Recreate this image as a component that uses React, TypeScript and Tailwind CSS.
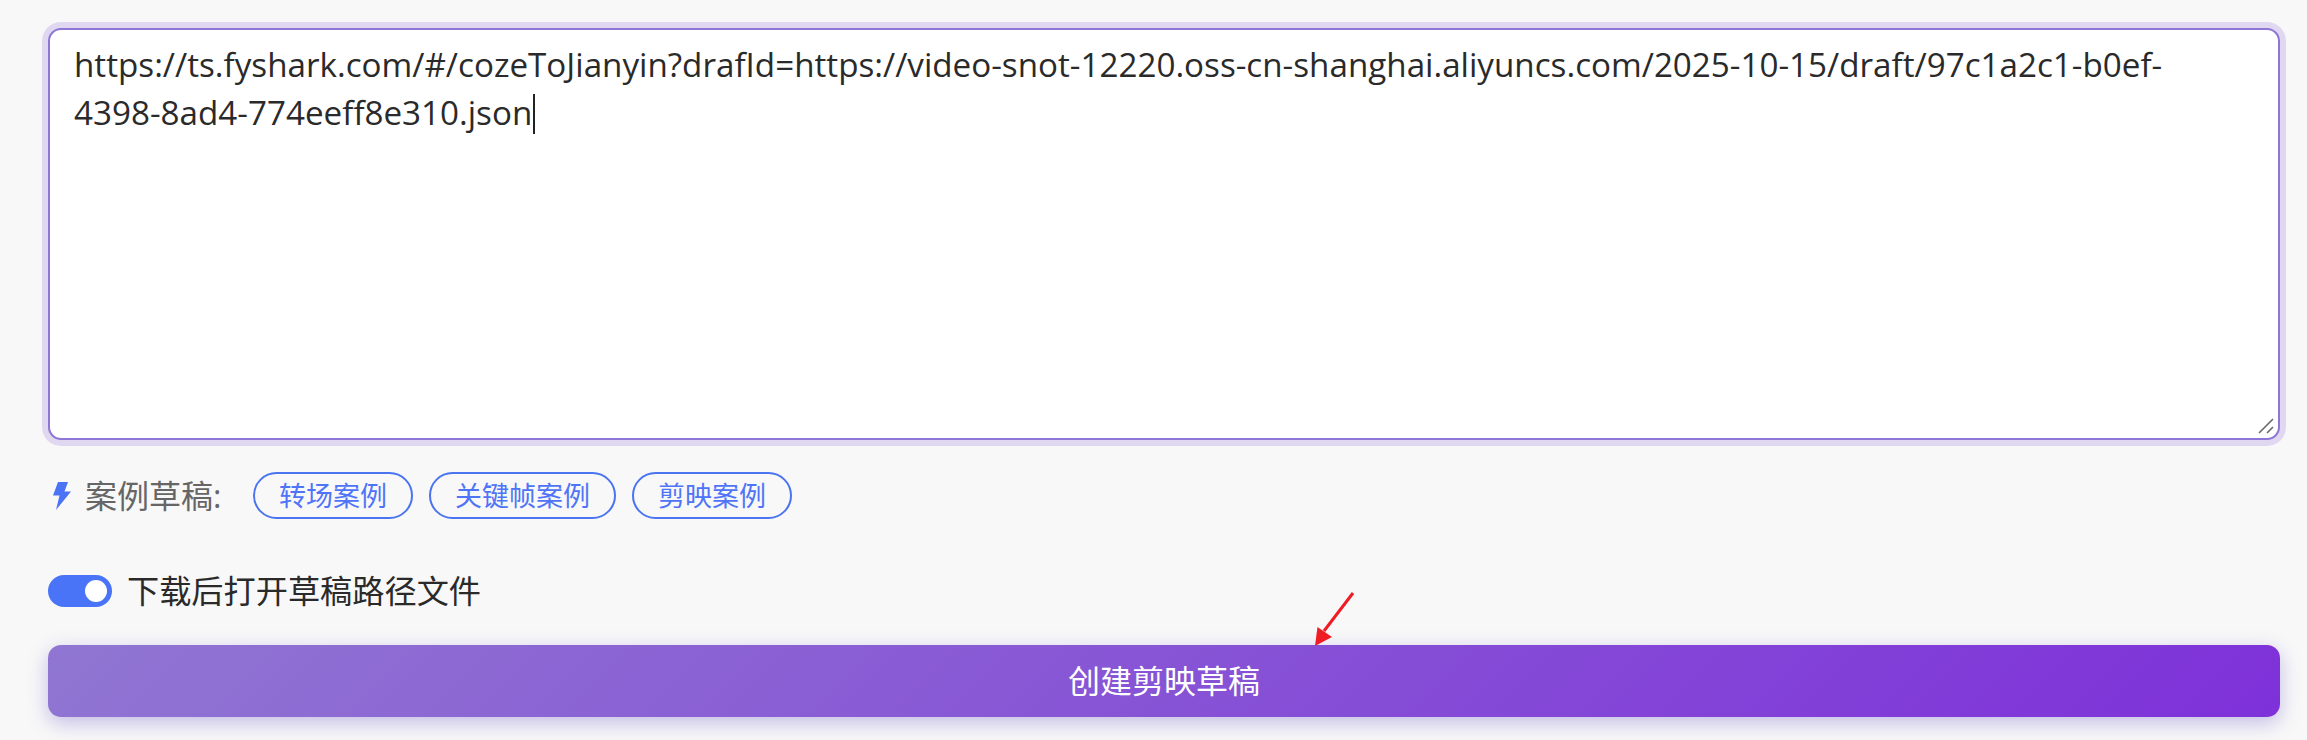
import React from 'react';

const samples = ['转场案例', '关键帧案例', '剪映案例'];

const App = () => {
  return (
    <div className="relative h-[740px] overflow-hidden bg-[#f8f8f8] pl-[48px] pr-[27px] pt-[28px] font-['Open_Sans','Noto_Sans_CJK_SC',sans-serif]">
      {/* url box */}
      <div className="relative h-[412px] rounded-[13px] border-2 border-[#8e76d6] bg-white pl-[24px] pr-[70px] pt-[11px] text-[33.2px] leading-[48px] text-[#2a2a2a] shadow-[0_0_0_6px_#e0d8f1]">
        <span className="break-words">
          https://ts.fyshark.com/#/cozeToJianyin?drafId=https://video-snot-12220.oss-cn-shanghai.aliyuncs.com/2025-10-15/draft/97c1a2c1-b0ef-4398-8ad4-774eeff8e310.json
        </span>
        <span className="ml-px inline-block h-[40px] w-[2px] bg-[#222] align-[-9px]" />
        {/* resize handle */}
        <svg className="absolute bottom-[2px] right-[2px]" width="18" height="18" viewBox="0 0 18 18">
          <path d="M1 15 L15 1 M9 15 L15 9" stroke="#6b6b6b" strokeWidth="1.6" fill="none" />
        </svg>
      </div>

      {/* samples */}
      <div className="mt-[32px] flex h-[47px] items-center">
        <svg className="ml-[5px] mr-[14px]" width="18" height="28" viewBox="0 0 18 28">
          <path d="M5 0 H15 L11.5 9.5 H18 L3 28 L6.5 13.5 H0 Z" fill="#4a74f5" />
        </svg>
        <span className="w-[135px] whitespace-nowrap text-[32px] text-[#666666]">案例草稿:</span>
        <div className="ml-[33px] flex gap-[16px]">
          {samples.map((s) => (
            <button
              key={s}
              className="h-[47px] rounded-full border-2 border-[#4a74f0] px-[24px] text-[27px] leading-none text-[#4f74f7]"
            >
              {s}
            </button>
          ))}
        </div>
      </div>

      {/* toggle */}
      <div className="mt-[56px] flex h-[32px] items-center">
        <div className="flex h-[32px] w-[64px] items-center justify-end rounded-full bg-[#4a74f8] pr-[5px]">
          <div className="h-[22px] w-[22px] rounded-full bg-white" />
        </div>
        <span className="ml-[15px] text-[32.2px] leading-none text-[#2a2a2a]">下载后打开草稿路径文件</span>
      </div>

      {/* submit */}
      <button className="mt-[38px] flex h-[72px] w-full items-center justify-center rounded-[13px] bg-[linear-gradient(135deg,#9076d2,#7e31d9)] text-[32px] text-white shadow-[0_6px_20px_rgba(103,80,200,0.36)]">
        创建剪映草稿
      </button>

      {/* red annotation arrow */}
      <svg className="absolute left-[1310px] top-[588px]" width="50" height="62" viewBox="0 0 50 62">
        <path d="M43 5 L14 43" stroke="#ee1c25" strokeWidth="3" fill="none" />
        <path d="M5 58 L7.5 39 L22 49 Z" fill="#ee1c25" />
      </svg>
    </div>
  );
};

export default App;
